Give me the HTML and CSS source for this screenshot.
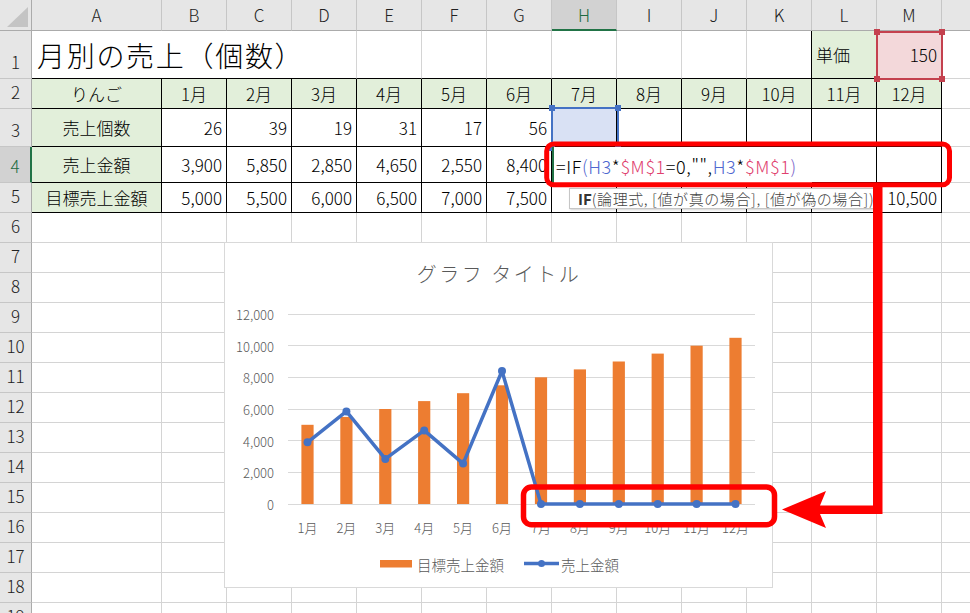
FILE: index.html
```html
<!DOCTYPE html>
<html lang="ja">
<head>
<meta charset="utf-8">
<title>月別の売上（個数）</title>
<link rel="stylesheet" href="styles.css">
</head>
<body>
<div class="wrap">
<div class="sheet">
<div class="corner"></div>
<div class="h">A</div><div class="h">B</div><div class="h">C</div><div class="h">D</div><div class="h">E</div><div class="h">F</div><div class="h">G</div><div class="h hs">H</div><div class="h">I</div><div class="h">J</div><div class="h">K</div><div class="h">L</div><div class="h">M</div><div class="h"></div>

<div class="rh">1</div>
<div class="title kb">月別の売上（個数）</div>
<div class="kb"></div><div class="kb"></div><div class="kb"></div><div class="kb"></div><div class="kb"></div><div class="kb"></div><div class="kb kr"></div>
<div class="k g">単価</div>
<div class="k pink r">150</div>
<div></div>

<div class="rh">2</div>
<div class="k g ctr">りんご</div>
<div class="k g ctr">1月</div><div class="k g ctr">2月</div><div class="k g ctr">3月</div><div class="k g ctr">4月</div><div class="k g ctr">5月</div><div class="k g ctr">6月</div><div class="k g ctr">7月</div><div class="k g ctr">8月</div><div class="k g ctr">9月</div><div class="k g ctr">10月</div><div class="k g ctr">11月</div><div class="k g ctr">12月</div>
<div></div>

<div class="rh">3</div>
<div class="k g ctr">売上個数</div>
<div class="k r">26</div><div class="k r">39</div><div class="k r">19</div><div class="k r">31</div><div class="k r">17</div><div class="k r">56</div>
<div class="k blue"></div><div class="k"></div><div class="k"></div><div class="k"></div><div class="k"></div><div class="k"></div>
<div></div>

<div class="rh rs">4</div>
<div class="k g ctr">売上金額</div>
<div class="k r">3,900</div><div class="k r">5,850</div><div class="k r">2,850</div><div class="k r">4,650</div><div class="k r">2,550</div><div class="k r">8,400</div>
<div class="k"></div><div class="k"></div><div class="k"></div><div class="k"></div><div class="k"></div><div class="k"></div>
<div></div>

<div class="rh">5</div>
<div class="k g ctr">目標売上金額</div>
<div class="k r">5,000</div><div class="k r">5,500</div><div class="k r">6,000</div><div class="k r">6,500</div><div class="k r">7,000</div><div class="k r">7,500</div><div class="k"></div><div class="k"></div><div class="k"></div><div class="k"></div><div class="k"></div><div class="k r">10,500</div>
<div></div>

<div class="rh">6</div><div></div><div></div><div></div><div></div><div></div><div></div><div></div><div></div><div></div><div></div><div></div><div></div><div></div><div></div>
<div class="rh">7</div><div></div><div></div><div></div><div></div><div></div><div></div><div></div><div></div><div></div><div></div><div></div><div></div><div></div><div></div>
<div class="rh">8</div><div></div><div></div><div></div><div></div><div></div><div></div><div></div><div></div><div></div><div></div><div></div><div></div><div></div><div></div>
<div class="rh">9</div><div></div><div></div><div></div><div></div><div></div><div></div><div></div><div></div><div></div><div></div><div></div><div></div><div></div><div></div>
<div class="rh">10</div><div></div><div></div><div></div><div></div><div></div><div></div><div></div><div></div><div></div><div></div><div></div><div></div><div></div><div></div>
<div class="rh">11</div><div></div><div></div><div></div><div></div><div></div><div></div><div></div><div></div><div></div><div></div><div></div><div></div><div></div><div></div>
<div class="rh">12</div><div></div><div></div><div></div><div></div><div></div><div></div><div></div><div></div><div></div><div></div><div></div><div></div><div></div><div></div>
<div class="rh">13</div><div></div><div></div><div></div><div></div><div></div><div></div><div></div><div></div><div></div><div></div><div></div><div></div><div></div><div></div>
<div class="rh">14</div><div></div><div></div><div></div><div></div><div></div><div></div><div></div><div></div><div></div><div></div><div></div><div></div><div></div><div></div>
<div class="rh">15</div><div></div><div></div><div></div><div></div><div></div><div></div><div></div><div></div><div></div><div></div><div></div><div></div><div></div><div></div>
<div class="rh">16</div><div></div><div></div><div></div><div></div><div></div><div></div><div></div><div></div><div></div><div></div><div></div><div></div><div></div><div></div>
<div class="rh">17</div><div></div><div></div><div></div><div></div><div></div><div></div><div></div><div></div><div></div><div></div><div></div><div></div><div></div><div></div>
<div class="rh">18</div><div></div><div></div><div></div><div></div><div></div><div></div><div></div><div></div><div></div><div></div><div></div><div></div><div></div><div></div>
<div class="rh">19</div><div></div><div></div><div></div><div></div><div></div><div></div><div></div><div></div><div></div><div></div><div></div><div></div><div></div><div></div>
</div>

<div class="selbox sel-h3"><span class="tl"></span><span class="tr"></span><span class="bl"></span><span class="br"></span></div>
<div class="selbox sel-m1"><span class="tl"></span><span class="tr"></span><span class="bl"></span><span class="br"></span></div>

<div class="edit">=IF<span class="fb">(</span><span class="fb">H3</span>*<span class="fr">$M$1</span>=0,"",<span class="fb">H3</span>*<span class="fr">$M$1</span><span class="fp">)</span></div>

<div class="tip"><b>IF</b>(論理式, [値が真の場合], [値が偽の場合])</div>

<svg class="chart" viewBox="224 242 549 346" width="549" height="346">
  <rect x="224.5" y="242.5" width="548" height="345" fill="#fff" stroke="#d9d9d9"/>
  <text class="ct" x="499" y="273">グラフ タイトル</text>
  <g stroke="#d9d9d9" stroke-width="1">
    <line x1="288" x2="755" y1="314.5" y2="314.5"/>
    <line x1="288" x2="755" y1="345.5" y2="345.5"/>
    <line x1="288" x2="755" y1="377.5" y2="377.5"/>
    <line x1="288" x2="755" y1="409.5" y2="409.5"/>
    <line x1="288" x2="755" y1="440.5" y2="440.5"/>
    <line x1="288" x2="755" y1="472.5" y2="472.5"/>
    <line x1="288" x2="755" y1="504.5" y2="504.5"/>
  </g>
  <g class="yl">
    <text x="274" y="314">12,000</text>
    <text x="274" y="346">10,000</text>
    <text x="274" y="377">8,000</text>
    <text x="274" y="409">6,000</text>
    <text x="274" y="441">4,000</text>
    <text x="274" y="472">2,000</text>
    <text x="274" y="504">0</text>
  </g>
  <g fill="#ed7d31">
    <rect x="301.4" y="424.8" width="12.2" height="79.2"/>
    <rect x="340.3" y="416.9" width="12.2" height="87.1"/>
    <rect x="379.2" y="409" width="12.2" height="95"/>
    <rect x="418.1" y="401.1" width="12.2" height="102.9"/>
    <rect x="457.0" y="393.2" width="12.2" height="110.8"/>
    <rect x="495.9" y="385.3" width="12.2" height="118.7"/>
    <rect x="534.9" y="377.3" width="12.2" height="126.7"/>
    <rect x="573.8" y="369.4" width="12.2" height="134.6"/>
    <rect x="612.7" y="361.5" width="12.2" height="142.5"/>
    <rect x="651.6" y="353.6" width="12.2" height="150.4"/>
    <rect x="690.5" y="345.7" width="12.2" height="158.3"/>
    <rect x="729.4" y="337.8" width="12.2" height="166.2"/>
  </g>
  <polyline fill="none" stroke="#4472c4" stroke-width="3.5" stroke-linejoin="round" stroke-linecap="round"
    points="307.5,442.3 346.4,411.4 385.3,458.9 424.2,430.4 463.1,463.6 502,371 541,504 579.9,504 618.8,504 657.7,504 696.6,504 735.5,504"/>
  <g fill="#4472c4">
    <circle cx="307.5" cy="442.3" r="4"/><circle cx="346.4" cy="411.4" r="4"/><circle cx="385.3" cy="458.9" r="4"/>
    <circle cx="424.2" cy="430.4" r="4"/><circle cx="463.1" cy="463.6" r="4"/><circle cx="502" cy="371" r="4"/>
    <circle cx="541" cy="504" r="4"/><circle cx="579.9" cy="504" r="4"/><circle cx="618.8" cy="504" r="4"/>
    <circle cx="657.7" cy="504" r="4"/><circle cx="696.6" cy="504" r="4"/><circle cx="735.5" cy="504" r="4"/>
  </g>
  <g class="xl">
    <text x="307.5" y="527">1月</text><text x="346.4" y="527">2月</text><text x="385.3" y="527">3月</text>
    <text x="424.2" y="527">4月</text><text x="463.1" y="527">5月</text><text x="502" y="527">6月</text>
    <text x="541" y="527">7月</text><text x="579.9" y="527">8月</text><text x="618.8" y="527">9月</text>
    <text x="657.7" y="527">10月</text><text x="696.6" y="527">11月</text><text x="735.5" y="527">12月</text>
  </g>
  <rect x="380" y="560" width="32" height="7.5" fill="#ed7d31"/>
  <text class="lg" x="417" y="564">目標売上金額</text>
  <line x1="524" x2="559" y1="563.5" y2="563.5" stroke="#4472c4" stroke-width="3.5"/>
  <circle cx="541.5" cy="563.5" r="3.5" fill="#4472c4"/>
  <text class="lg" x="561" y="564">売上金額</text>
</svg>

<svg class="anno" viewBox="0 0 970 613" width="970" height="613">
  <rect x="546.7" y="144" width="402.8" height="40.8" rx="7" fill="none" stroke="#ff0000" stroke-width="5"/>
  <rect x="523.5" y="487" width="251" height="37.7" rx="8" fill="none" stroke="#ff0000" stroke-width="5.5"/>
  <path d="M873 187 V505.5 H820 L826 491 L782 509.5 L826 528 L820 514 H882.5 V187 Z" fill="#ff0000"/>
</svg>
</div>
</body>
</html>
```

FILE: styles.css
```css
* { box-sizing: border-box; margin: 0; padding: 0; }

html, body {
  width: 970px;
  height: 613px;
  overflow: hidden;
  background: #fff;
}

body {
  font-family: "Noto Sans CJK JP", "Noto Sans", sans-serif;
  font-weight: 300;
  color: #000;
}

.wrap {
  position: relative;
  width: 970px;
  height: 613px;
  overflow: hidden;
}

.sheet {
  display: grid;
  grid-template-columns: 32px 130px repeat(12, 65px) 65px;
  grid-template-rows: 31px 48px 30px 38px 36px 30px repeat(14, 30px);
  width: 1007px;
  font-size: 17px;
  line-height: 20px;
}

.sheet > div {
  display: flex;
  align-items: center;
  padding: 0 4px;
  border-right: 1px solid #d4d4d4;
  border-bottom: 1px solid #d4d4d4;
  white-space: nowrap;
  overflow: hidden;
  min-width: 0;
}

/* headers */
.sheet .corner {
  background: #e6e6e6;
  border-right: 1px solid #ababab;
  border-bottom: 1px solid #ababab;
  justify-content: flex-end;
  align-items: flex-end;
  padding: 0 3px 3px 0;
}
.sheet .corner::after {
  content: "";
  width: 0;
  height: 0;
  border-left: 21px solid transparent;
  border-bottom: 20px solid #c4c4c4;
}

.sheet .h {
  background: #e6e6e6;
  color: #222;
  justify-content: center;
  border-right: 1px solid #c6c6c6;
  border-bottom: 1px solid #ababab;
}
.sheet .hs {
  background: #d2d2d2;
  color: #1d6b41;
  border-bottom: 2px solid #217346;
}

.sheet .rh {
  background: #e6e6e6;
  color: #222;
  justify-content: center;
  align-items: flex-end;
  padding: 0 0 6px 0;
  border-right: 1px solid #ababab;
  border-bottom: 1px solid #c6c6c6;
}
.sheet .rs {
  background: #d2d2d2;
  color: #1d6b41;
  border-right: 2px solid #217346;
}

/* cells */
.sheet .title {
  grid-column: span 4;
  font-size: 28px;
  line-height: 36px;
  letter-spacing: 1.7px;
  padding-left: 5px;
}
.sheet .k { border-right-color: #000; border-bottom-color: #000; }
.sheet .kb { border-bottom-color: #000; }
.sheet .kr { border-right-color: #000; }
.sheet .g { background: #e2efda; }
.sheet .pink { background: #f3d8da; }
.sheet .blue { background: #d9e1f4; }
.sheet .ctr { justify-content: center; }
.sheet .r { justify-content: flex-end; }

/* selection boxes */
.selbox {
  position: absolute;
  border: 2px solid currentColor;
}
.selbox span {
  position: absolute;
  width: 6px;
  height: 6px;
  background: currentColor;
}
.selbox .tl { left: -4px; top: -4px; }
.selbox .tr { right: -4px; top: -4px; }
.selbox .bl { left: -4px; bottom: -4px; }
.selbox .br { right: -4px; bottom: -4px; }

.sel-h3 {
  color: #4472c4;
  left: 551px;
  top: 107px;
  width: 68px;
  height: 42px;
}
.sel-m1 {
  color: #c4414e;
  left: 876px;
  top: 31px;
  width: 67px;
  height: 49px;
}

/* editing cell */
.edit {
  position: absolute;
  left: 552px;
  top: 147px;
  width: 260px;
  height: 37px;
  background: #fff;
  border-left: 2px solid #217346;
  padding-left: 2px;
  display: flex;
  align-items: center;
  font-size: 18px;
  line-height: 20px;
  letter-spacing: 0.6px;
  white-space: nowrap;
  color: #000;
}
.fb { color: #5068d0; }
.fr { color: #e0406e; }
.fp { color: #7a64c8; }

/* function tooltip */
.tip {
  position: absolute;
  left: 569px;
  top: 188px;
  width: 308px;
  height: 21px;
  background: #fff;
  border: 1px solid #c6c6c6;
  box-shadow: 1px 1px 2px rgba(0, 0, 0, 0.18);
  padding-left: 8px;
  font-size: 15px;
  line-height: 19px;
  letter-spacing: 0.6px;
  color: #444;
  white-space: nowrap;
  overflow: hidden;
}
.tip b { color: #333; font-weight: 700; letter-spacing: 0; }

/* chart */
.chart {
  position: absolute;
  left: 224px;
  top: 242px;
}
.chart text {
  font-family: "Noto Sans CJK JP", "Noto Sans", sans-serif;
  font-weight: 300;
  fill: #595959;
  font-size: 13px;
  dominant-baseline: central;
}
.chart .ct {
  font-size: 20px;
  text-anchor: middle;
  letter-spacing: 2.5px;
}
.chart .yl text { text-anchor: end; }
.chart .xl text { text-anchor: middle; }
.chart .lg { font-size: 14.5px; }

/* annotations */
.anno {
  position: absolute;
  left: 0;
  top: 0;
  pointer-events: none;
}
```
